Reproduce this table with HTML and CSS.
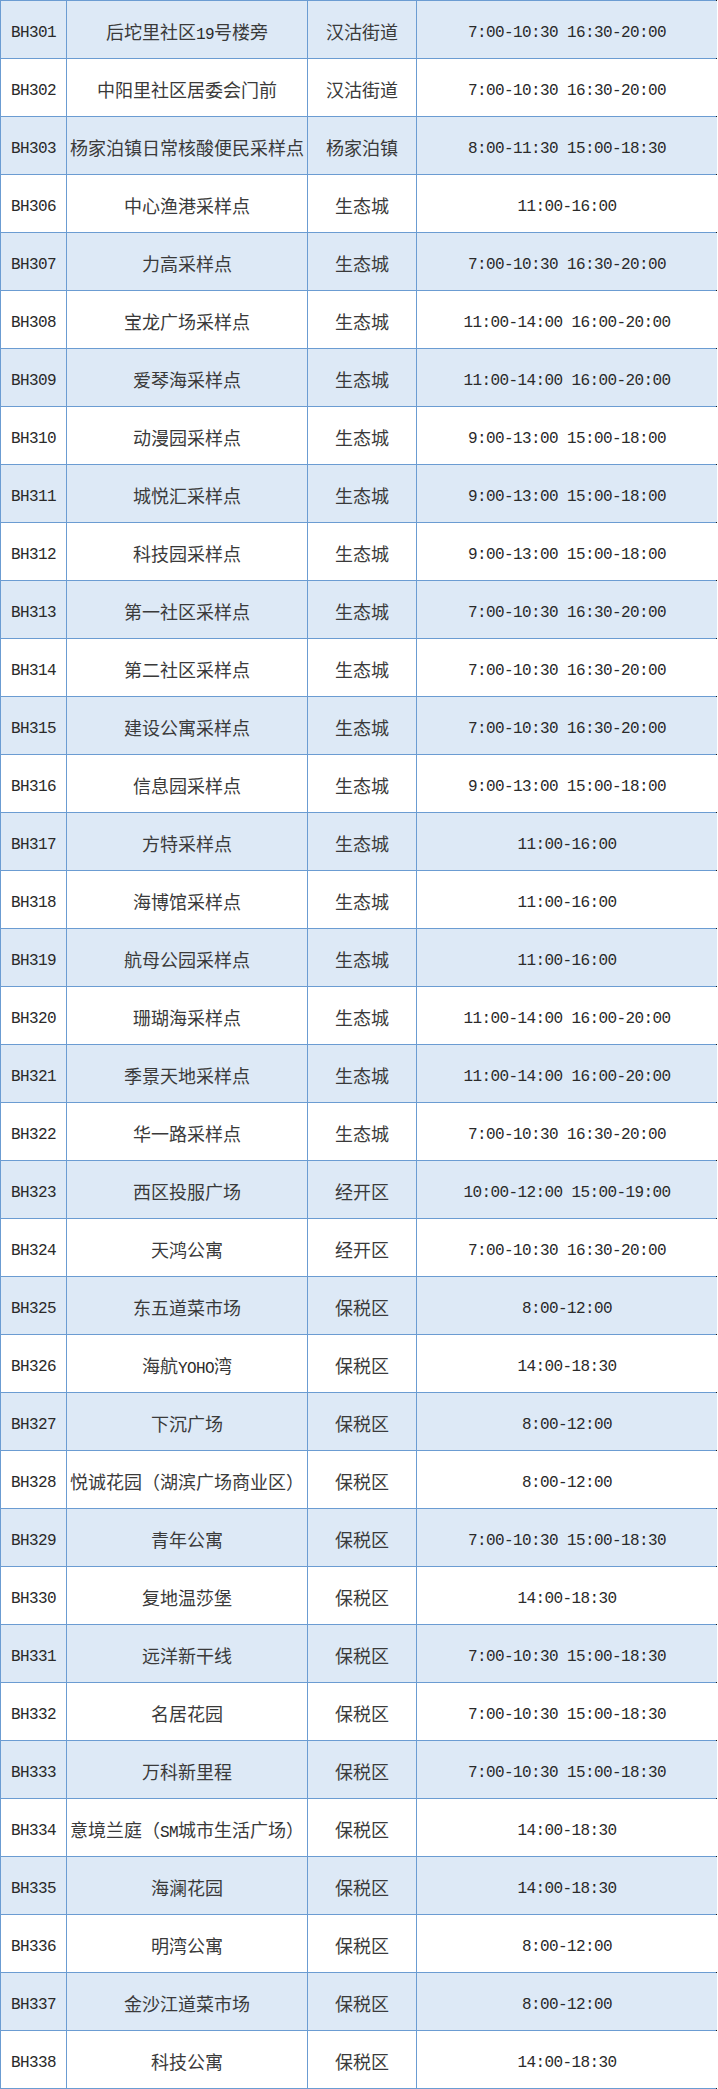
FILE: index.html
```html
<!DOCTYPE html>
<html lang="zh">
<head>
<meta charset="utf-8">
<title>采样点</title>
<link rel="stylesheet" href="styles.css">
</head>
<body>
<div class="table">
<div class="row alt"><div class="cell code">BH301</div><div class="cell">后坨里社区<span class="lat">19</span>号楼旁</div><div class="cell">汉沽街道</div><div class="cell time">7:00-10:30 16:30-20:00</div></div>
<div class="row"><div class="cell code">BH302</div><div class="cell">中阳里社区居委会门前</div><div class="cell">汉沽街道</div><div class="cell time">7:00-10:30 16:30-20:00</div></div>
<div class="row alt"><div class="cell code">BH303</div><div class="cell">杨家泊镇日常核酸便民采样点</div><div class="cell">杨家泊镇</div><div class="cell time">8:00-11:30 15:00-18:30</div></div>
<div class="row"><div class="cell code">BH306</div><div class="cell">中心渔港采样点</div><div class="cell">生态城</div><div class="cell time">11:00-16:00</div></div>
<div class="row alt"><div class="cell code">BH307</div><div class="cell">力高采样点</div><div class="cell">生态城</div><div class="cell time">7:00-10:30 16:30-20:00</div></div>
<div class="row"><div class="cell code">BH308</div><div class="cell">宝龙广场采样点</div><div class="cell">生态城</div><div class="cell time">11:00-14:00 16:00-20:00</div></div>
<div class="row alt"><div class="cell code">BH309</div><div class="cell">爱琴海采样点</div><div class="cell">生态城</div><div class="cell time">11:00-14:00 16:00-20:00</div></div>
<div class="row"><div class="cell code">BH310</div><div class="cell">动漫园采样点</div><div class="cell">生态城</div><div class="cell time">9:00-13:00 15:00-18:00</div></div>
<div class="row alt"><div class="cell code">BH311</div><div class="cell">城悦汇采样点</div><div class="cell">生态城</div><div class="cell time">9:00-13:00 15:00-18:00</div></div>
<div class="row"><div class="cell code">BH312</div><div class="cell">科技园采样点</div><div class="cell">生态城</div><div class="cell time">9:00-13:00 15:00-18:00</div></div>
<div class="row alt"><div class="cell code">BH313</div><div class="cell">第一社区采样点</div><div class="cell">生态城</div><div class="cell time">7:00-10:30 16:30-20:00</div></div>
<div class="row"><div class="cell code">BH314</div><div class="cell">第二社区采样点</div><div class="cell">生态城</div><div class="cell time">7:00-10:30 16:30-20:00</div></div>
<div class="row alt"><div class="cell code">BH315</div><div class="cell">建设公寓采样点</div><div class="cell">生态城</div><div class="cell time">7:00-10:30 16:30-20:00</div></div>
<div class="row"><div class="cell code">BH316</div><div class="cell">信息园采样点</div><div class="cell">生态城</div><div class="cell time">9:00-13:00 15:00-18:00</div></div>
<div class="row alt"><div class="cell code">BH317</div><div class="cell">方特采样点</div><div class="cell">生态城</div><div class="cell time">11:00-16:00</div></div>
<div class="row"><div class="cell code">BH318</div><div class="cell">海博馆采样点</div><div class="cell">生态城</div><div class="cell time">11:00-16:00</div></div>
<div class="row alt"><div class="cell code">BH319</div><div class="cell">航母公园采样点</div><div class="cell">生态城</div><div class="cell time">11:00-16:00</div></div>
<div class="row"><div class="cell code">BH320</div><div class="cell">珊瑚海采样点</div><div class="cell">生态城</div><div class="cell time">11:00-14:00 16:00-20:00</div></div>
<div class="row alt"><div class="cell code">BH321</div><div class="cell">季景天地采样点</div><div class="cell">生态城</div><div class="cell time">11:00-14:00 16:00-20:00</div></div>
<div class="row"><div class="cell code">BH322</div><div class="cell">华一路采样点</div><div class="cell">生态城</div><div class="cell time">7:00-10:30 16:30-20:00</div></div>
<div class="row alt"><div class="cell code">BH323</div><div class="cell">西区投服广场</div><div class="cell">经开区</div><div class="cell time">10:00-12:00 15:00-19:00</div></div>
<div class="row"><div class="cell code">BH324</div><div class="cell">天鸿公寓</div><div class="cell">经开区</div><div class="cell time">7:00-10:30 16:30-20:00</div></div>
<div class="row alt"><div class="cell code">BH325</div><div class="cell">东五道菜市场</div><div class="cell">保税区</div><div class="cell time">8:00-12:00</div></div>
<div class="row"><div class="cell code">BH326</div><div class="cell">海航<span class="lat">YOHO</span>湾</div><div class="cell">保税区</div><div class="cell time">14:00-18:30</div></div>
<div class="row alt"><div class="cell code">BH327</div><div class="cell">下沉广场</div><div class="cell">保税区</div><div class="cell time">8:00-12:00</div></div>
<div class="row"><div class="cell code">BH328</div><div class="cell">悦诚花园（湖滨广场商业区）</div><div class="cell">保税区</div><div class="cell time">8:00-12:00</div></div>
<div class="row alt"><div class="cell code">BH329</div><div class="cell">青年公寓</div><div class="cell">保税区</div><div class="cell time">7:00-10:30 15:00-18:30</div></div>
<div class="row"><div class="cell code">BH330</div><div class="cell">复地温莎堡</div><div class="cell">保税区</div><div class="cell time">14:00-18:30</div></div>
<div class="row alt"><div class="cell code">BH331</div><div class="cell">远洋新干线</div><div class="cell">保税区</div><div class="cell time">7:00-10:30 15:00-18:30</div></div>
<div class="row"><div class="cell code">BH332</div><div class="cell">名居花园</div><div class="cell">保税区</div><div class="cell time">7:00-10:30 15:00-18:30</div></div>
<div class="row alt"><div class="cell code">BH333</div><div class="cell">万科新里程</div><div class="cell">保税区</div><div class="cell time">7:00-10:30 15:00-18:30</div></div>
<div class="row"><div class="cell code">BH334</div><div class="cell">意境兰庭（<span class="lat">SM</span>城市生活广场）</div><div class="cell">保税区</div><div class="cell time">14:00-18:30</div></div>
<div class="row alt"><div class="cell code">BH335</div><div class="cell">海澜花园</div><div class="cell">保税区</div><div class="cell time">14:00-18:30</div></div>
<div class="row"><div class="cell code">BH336</div><div class="cell">明湾公寓</div><div class="cell">保税区</div><div class="cell time">8:00-12:00</div></div>
<div class="row alt"><div class="cell code">BH337</div><div class="cell">金沙江道菜市场</div><div class="cell">保税区</div><div class="cell time">8:00-12:00</div></div>
<div class="row"><div class="cell code">BH338</div><div class="cell">科技公寓</div><div class="cell">保税区</div><div class="cell time">14:00-18:30</div></div>
</div>
</body>
</html>
```

FILE: styles.css
```css
html, body {
  margin: 0;
  padding: 0;
  background: #ffffff;
}

.table {
  width: 717px;
  box-sizing: border-box;
  padding: 1px 0 1px 1px;
  background: #6b9cd2;
  border-right: 1px solid #1b1b1b;
  display: flex;
  flex-direction: column;
  gap: 1px;
  font-family: "Noto Sans CJK SC", "Liberation Mono", sans-serif;
  font-size: 18px;
  color: #3a3a3a;
}

.row {
  display: grid;
  grid-template-columns: 65px 240px 108px 300px;
  gap: 1px;
  height: 57px;
}

.cell {
  background: #ffffff;
  display: block;
  text-align: center;
  white-space: nowrap;
  line-height: 60px;
  overflow: hidden;
}

.row.alt .cell {
  background: #dde9f6;
}

.code,
.time,
.lat {
  font-family: "Liberation Mono", "DejaVu Sans Mono", monospace;
  font-size: 16px;
  letter-spacing: -0.6px;
  color: #2a2a2a;
}

.code,
.time {
  line-height: 65px;
}

.time {
  white-space: pre;
}
```
